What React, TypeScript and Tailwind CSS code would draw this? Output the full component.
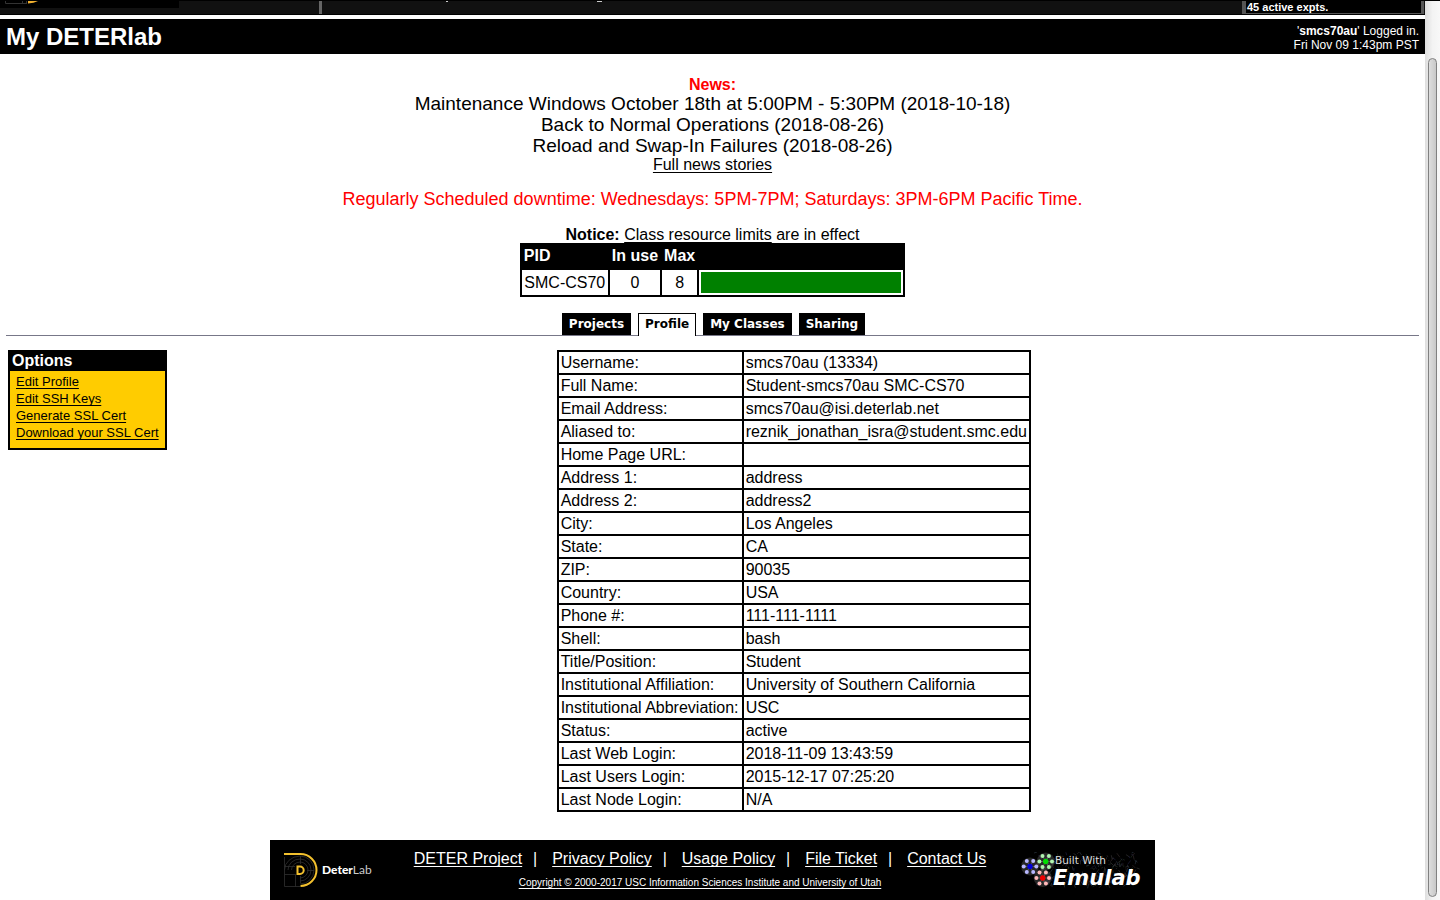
import React from "react";

const linkLine = "underline underline-offset-2 [text-decoration-skip-ink:none]";

const news = [
  "Maintenance Windows October 18th at 5:00PM - 5:30PM (2018-10-18)",
  "Back to Normal Operations (2018-08-26)",
  "Reload and Swap-In Failures (2018-08-26)",
];

const tabs = ["Projects", "Profile", "My Classes", "Sharing"];

const options = ["Edit Profile", "Edit SSH Keys", "Generate SSL Cert", "Download your SSL Cert"];

const profile: [string, string][] = [
  ["Username:", "smcs70au (13334)"],
  ["Full Name:", "Student-smcs70au SMC-CS70"],
  ["Email Address:", "smcs70au@isi.deterlab.net"],
  ["Aliased to:", "reznik_jonathan_isra@student.smc.edu"],
  ["Home Page URL:", ""],
  ["Address 1:", "address"],
  ["Address 2:", "address2"],
  ["City:", "Los Angeles"],
  ["State:", "CA"],
  ["ZIP:", "90035"],
  ["Country:", "USA"],
  ["Phone #:", "111-111-1111"],
  ["Shell:", "bash"],
  ["Title/Position:", "Student"],
  ["Institutional Affiliation:", "University of Southern California"],
  ["Institutional Abbreviation:", "USC"],
  ["Status:", "active"],
  ["Last Web Login:", "2018-11-09 13:43:59"],
  ["Last Users Login:", "2015-12-17 07:25:20"],
  ["Last Node Login:", "N/A"],
];

const footerLinks = ["DETER Project", "Privacy Policy", "Usage Policy", "File Ticket", "Contact Us"];

function TopStrip() {
  return (
    <div className="flex h-[14px] items-start overflow-hidden border-b border-black bg-[#111]">
      <div className="h-[7px] w-[179px] bg-black">
        <svg width="60" height="4" viewBox="0 0 60 4" aria-hidden="true">
          <path d="M5.5 0V2.5H27M22.5 0V2M26.5 0V2" fill="none" stroke="#333" />
          <path d="M28 0H38Q34 2 28 2.5Z" fill="#f0b030" />
        </svg>
      </div>
      <div className="ml-[140px] h-full w-[3px] bg-[#666]" />
      <svg className="ml-[122px]" width="162" height="2" viewBox="0 0 162 2" aria-hidden="true">
        <path d="M2 0.5H4M153 0.5H158" stroke="#ccc" />
      </svg>
      <div className="ml-auto mr-px h-[13px] w-[182px] border-r-[3px] border-b border-l-4 border-[#555] bg-black text-[11px] leading-[12px] font-bold text-white">
        <span className="pl-px">45 active expts.</span>
      </div>
    </div>
  );
}

function DeterLogo() {
  return (
    <svg width="92" height="40" viewBox="0 0 92 40" role="img" aria-label="DeterLab">
      <g fill="none" stroke="#303030" strokeWidth="0.8">
        <path d="M1.500 7V36.500H17M1.500 24.500H13M1.500 16.500H12M12.500 25V36.500M17.500 6V14M17.500 26V33M24 20.500H31" />
        <path d="M1.500 20A16 14 0 0 1 17 6A14 14 0 0 1 17 34M5 20A12 11 0 0 1 17 9A11 11 0 0 1 17 31M8.500 20A9 8 0 0 1 17 12A8 8 0 0 1 17 28" />
      </g>
      <path d="M1 4H17.500A16 16 0 0 1 17.500 36" fill="none" stroke="#f2c02e" strokeWidth="2" />
      <path d="M14.500 16.500H17A3.700 3.700 0 0 1 17 23.900H14.500Z" fill="none" stroke="#f2c02e" strokeWidth="2" />
      <text x="39" y="24" fill="#fff" fontSize="12" fontFamily="Lato, sans-serif">
        <tspan fontWeight="900">Deter</tspan>
        <tspan fill="#ccc">Lab</tspan>
      </text>
    </svg>
  );
}

function Flower({ x, y, core, petal }: { x: number; y: number; core: string; petal: string }) {
  const around = [[-6.3, 0], [6.3, 0], [-3.2, -5.6], [3.2, -5.6], [-3.2, 5.6], [3.2, 5.6]];
  return (
    <g>
      <circle cx={x} cy={y} r="9" fill="#999" opacity="0.25" />
      {around.map(([dx, dy], i) => (
        <g key={i}>
          <path d={`M${x} ${y}L${x + dx} ${y + dy}`} stroke="#777" strokeWidth="0.6" />
          <circle cx={x + dx} cy={y + dy} r="2" fill={petal} />
        </g>
      ))}
      <circle cx={x} cy={y} r="2.7" fill={core} />
    </g>
  );
}

function EmulabLogo() {
  const hues = ["#456", "#544", "#354a35", "#336", "#555"];
  return (
    <svg width="122" height="37" viewBox="0 0 122 37" role="img" aria-label="Built With Emulab">
      {Array.from({ length: 260 }, (_, i) => {
        const x = 16 + ((i * 61.803) % 100);
        const y = (i * i * 7.31 + i * 3.7) % 33;
        return (
          <path
            key={i}
            d={`M${x} ${y}l${((i * 5) % 7) - 3} ${1 + (i % 4)}`}
            stroke={hues[i % 5]}
            strokeWidth="0.7"
            opacity="0.6"
          />
        );
      })}
      <Flower x={9} y={14.5} core="#0000dd" petal="#b8b8ff" />
      <Flower x={24.7} y={9.5} core="#00dd00" petal="#b0f5b0" />
      <Flower x={21.7} y={26} core="#ee0000" petal="#ffb8b8" />
      <text x="34" y="12" fill="#ddd" fontSize="10.5" fontFamily="DejaVu Sans, sans-serif">
        Built With
      </text>
      <text x="32" y="33" fill="#fff" fontSize="21" fontWeight="bold" fontStyle="italic" fontFamily="DejaVu Sans, sans-serif">
        Emulab
      </text>
    </svg>
  );
}

function LimitsTable() {
  const head = "border-2 border-black bg-black px-[2px] font-bold text-white";
  const cell = "border-2 border-black px-[2px]";
  return (
    <table className="border-collapse text-base leading-[21px]">
      <thead>
        <tr>
          <th className={`${head} w-[88px] pb-[2px] text-left`}>PID</th>
          <th className={`${head} w-[52px] pb-[2px] whitespace-nowrap`}>In use</th>
          <th className={`${head} w-[37px] pb-[2px]`}>Max</th>
          <th className={`${head} w-[206px]`} aria-label="Usage" />
        </tr>
      </thead>
      <tbody>
        <tr>
          <td className={cell}>SMC-CS70</td>
          <td className={`${cell} text-center`}>0</td>
          <td className={`${cell} text-center`}>8</td>
          <td className="border-2 border-black p-[2px]">
            <div className="h-[21px] w-[200px] bg-[#008000]" />
          </td>
        </tr>
      </tbody>
    </table>
  );
}

function Page() {
  return (
    <div className="flex min-w-0 flex-1 flex-col">
      <TopStrip />
      <header className="mt-1 flex h-[35px] items-center justify-between bg-black px-[6px] text-white">
        <h1 className="text-2xl leading-[30px] font-bold">My DETERlab</h1>
        <div className="pt-[2px] text-right text-[12px] leading-[14px]">
          <p>
            '<b>smcs70au</b>' Logged in.
          </p>
          <p>Fri Nov 09 1:43pm PST</p>
        </div>
      </header>

      <section className="flex flex-col items-center pt-[22px] text-center">
        <h2 className="text-base leading-[17px] font-bold text-[#f00]">News:</h2>
        {news.map((item) => (
          <p key={item} className="text-[19px] leading-[21px]">
            {item}
          </p>
        ))}
        <a href="#news" className={`text-base leading-[18px] ${linkLine}`}>
          Full news stories
        </a>
        <p className="mt-[14px] text-[18px] leading-[22px] text-[#f00]">
          Regularly Scheduled downtime: Wednesdays: 5PM-7PM; Saturdays: 3PM-6PM Pacific Time.
        </p>
        <p className="mt-4 text-base leading-[17px]">
          <b>Notice:</b>{" "}
          <a href="#limits" className={linkLine}>
            Class resource limits
          </a>{" "}
          are in effect
        </p>
        <LimitsTable />
      </section>

      <nav className="mx-[6px] mt-4 flex items-end justify-center gap-[7px] border-b border-[#778] pl-[2px] font-['DejaVu_Sans',sans-serif] text-[12px] leading-[21px] font-bold">
        {tabs.map((tab) => (
          <a
            key={tab}
            href={`#${tab}`}
            className={
              tab === "Profile"
                ? "-mb-px border border-b-0 border-black bg-white px-[6px] pb-px text-black"
                : "border border-b-0 border-black bg-black px-[6px] text-white"
            }
          >
            {tab}
          </a>
        ))}
      </nav>

      <main className="mt-[14px] flex items-start px-[6px]">
        <aside className="ml-[2px] border-2 border-black bg-[#fc0]">
          <h2 className="bg-black px-[2px] pb-[2px] text-base leading-[17px] font-bold text-white">Options</h2>
          <ul className="px-[6px] pt-[2px] pb-[7px] text-[13px] leading-[17px]">
            {options.map((o) => (
              <li key={o}>
                <a href="#options" className={linkLine}>
                  {o}
                </a>
              </li>
            ))}
          </ul>
        </aside>
        <div className="flex flex-1 justify-center pl-[2px]">
          <table className="border-collapse text-base leading-[19px]">
            <tbody>
              {profile.map(([name, value]) => (
                <tr key={name} className="h-[23px]">
                  <th scope="row" className="w-[185px] border-2 border-black px-[2px] py-px text-left font-normal whitespace-nowrap">
                    {name}
                  </th>
                  <td className="border-2 border-black px-[2px] py-px">{value}</td>
                </tr>
              ))}
            </tbody>
          </table>
        </div>
      </main>

      <footer className="mx-auto mt-7 flex h-[60px] w-[885px] max-w-full items-start justify-between bg-black pr-3 pl-[13px] text-white">
        <div className="pt-[10px]">
          <DeterLogo />
        </div>
        <div className="flex flex-col items-center pt-[9px] pl-1">
          <div className="flex text-base leading-[19px]">
            {footerLinks.map((l, i) => (
              <React.Fragment key={l}>
                {i > 0 && <span className="w-[30px] pr-1 text-center">|</span>}
                <a href="#footer" className={linkLine}>
                  {l}
                </a>
              </React.Fragment>
            ))}
          </div>
          <a href="#copyright" className={`mt-2 text-[10px] leading-[13px] ${linkLine}`}>
            Copyright © 2000-2017 USC Information Sciences Institute and University of Utah
          </a>
        </div>
        <div className="pt-[12px]">
          <EmulabLogo />
        </div>
      </footer>
    </div>
  );
}

export default function App() {
  return (
    <div className="border-t border-black bg-white font-['Liberation_Sans',Arial,sans-serif] text-black">
      <div className="flex">
        <Page />
        <div className="flex w-[15px] bg-linear-to-r from-[#dedede] via-[#f3f3f3] to-[#f8f8f8] px-[3px] pt-[57px] pb-[3px]">
          <div className="w-full rounded-full border border-[#808080] bg-linear-to-r from-[#dedede] to-[#c8c8c8]" />
        </div>
      </div>
    </div>
  );
}
